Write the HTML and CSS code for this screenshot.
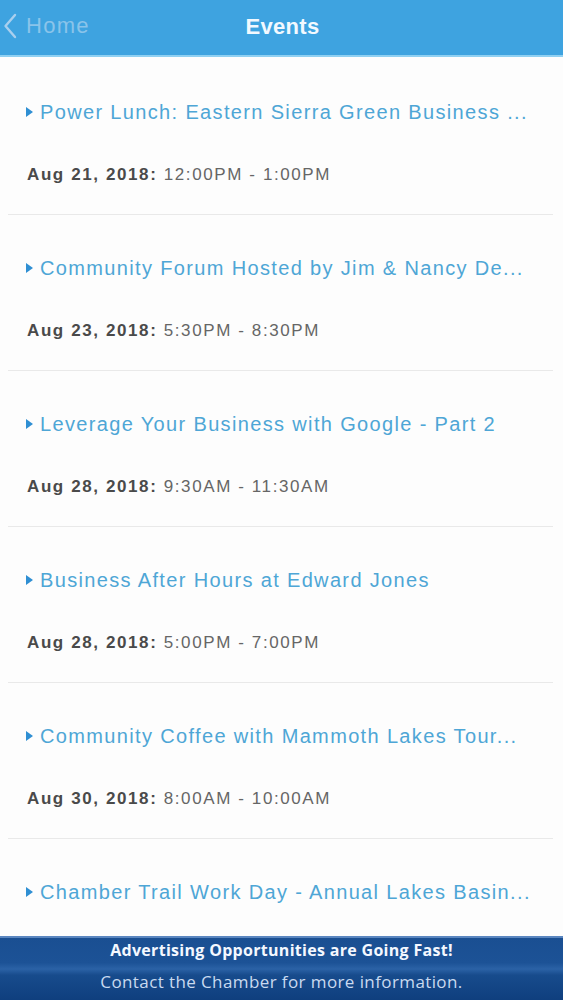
FILE: index.html
```html
<!DOCTYPE html>
<html lang="en">
<head>
<meta charset="utf-8">
<title>Events</title>
<link rel="stylesheet" href="styles.css">
</head>
<body>
<div class="app">
  <header class="navbar">
    <div class="back">
      <svg class="chev" width="14" height="26" viewBox="0 0 14 26"><path d="M12 2 L2.5 13 L12 24" fill="none" stroke="#a9cfee" stroke-width="2.4" stroke-linecap="round" stroke-linejoin="round"/></svg>
      <span>Home</span>
    </div>
    <h1 class="nav-title">Events</h1>
  </header>
  <ul class="events">
    <li class="event">
      <div class="ev-title"><span class="tri"></span>Power Lunch: Eastern Sierra Green Business ...</div>
      <div class="ev-date"><b>Aug 21, 2018:</b> 12:00PM - 1:00PM</div>
    </li>
    <li class="event">
      <div class="ev-title"><span class="tri"></span>Community Forum Hosted by Jim &amp; Nancy De...</div>
      <div class="ev-date"><b>Aug 23, 2018:</b> 5:30PM - 8:30PM</div>
    </li>
    <li class="event">
      <div class="ev-title"><span class="tri"></span>Leverage Your Business with Google - Part 2</div>
      <div class="ev-date"><b>Aug 28, 2018:</b> 9:30AM - 11:30AM</div>
    </li>
    <li class="event">
      <div class="ev-title"><span class="tri"></span>Business After Hours at Edward Jones</div>
      <div class="ev-date"><b>Aug 28, 2018:</b> 5:00PM - 7:00PM</div>
    </li>
    <li class="event">
      <div class="ev-title"><span class="tri"></span>Community Coffee with Mammoth Lakes Tour...</div>
      <div class="ev-date"><b>Aug 30, 2018:</b> 8:00AM - 10:00AM</div>
    </li>
    <li class="event last">
      <div class="ev-title"><span class="tri"></span>Chamber Trail Work Day - Annual Lakes Basin...</div>
    </li>
  </ul>
  <footer class="banner">
    <div class="b1">Advertising Opportunities are Going Fast!</div>
    <div class="b2">Contact the Chamber for more information.</div>
  </footer>
</div>
</body>
</html>
```
FILE: styles.css
```css
* { box-sizing: border-box; }
html, body { margin: 0; padding: 0; background: #fff; }
body { font-family: "Liberation Sans", Arial, sans-serif; }
.app {
  width: 563px;
  height: 1000px;
  overflow: hidden;
  background: #fdfdfd;
  display: flex;
  flex-direction: column;
}
.navbar {
  flex: none;
  height: 57px;
  background: #3ea3e0;
  border-bottom: 2px solid #8fd0f2;
  display: flex;
  align-items: center;
  justify-content: center;
  position: relative;
}
.back {
  position: absolute;
  left: 3px;
  top: 13px;
  display: flex;
  align-items: center;
  gap: 9px;
  color: #8ac4ea;
  font-size: 22px;
  letter-spacing: 1.3px;
}
.chev { display: block; }
.nav-title {
  margin: 0;
  color: #f2f9ff;
  font-size: 22px;
  font-weight: bold;
  letter-spacing: 0.3px;
  margin-top: -2px;
  margin-left: 2px;
}
.events {
  flex: 1;
  overflow: hidden;
  list-style: none;
  margin: 0;
  padding: 2px 0 0;
}
.event {
  margin: 0 10px 0 8px;
  padding: 41px 0 27px 18px;
  border-bottom: 1px solid #e9e9e9;
}
.event.last { border-bottom: none; }
.ev-title {
  height: 24px;
  line-height: 24px;
  font-size: 20px;
  letter-spacing: 1.35px;
  color: #4ea6d6;
  white-space: nowrap;
  display: flex;
  align-items: center;
}
.tri {
  width: 0;
  height: 0;
  border-left: 7px solid #2f8fd3;
  border-top: 5px solid transparent;
  border-bottom: 5px solid transparent;
  margin-right: 7px;
}
.ev-date {
  margin-top: 39px;
  height: 24px;
  line-height: 24px;
  font-size: 17px;
  letter-spacing: 1.6px;
  color: #666;
  padding-left: 1px;
}
.ev-date b { color: #4a4a4a; }
.banner {
  flex: none;
  height: 64px;
  border-top: 2px solid #5a86c0;
  background: linear-gradient(180deg, #1a4f92 0%, #1c5296 40%, #2b62a6 50%, #174b8c 60%, #0f3f7e 100%);
  text-align: center;
  font-family: "Open Sans", "Liberation Sans", sans-serif;
}
.b1 {
  color: #f4f8ff;
  font-weight: bold;
  font-size: 16px;
  line-height: 22px;
  margin-top: 1px;
  letter-spacing: 0.3px;
}
.b2 {
  color: #c9daf0;
  font-size: 17px;
  line-height: 22px;
  margin-top: 10px;
  letter-spacing: 0.4px;
}
```
